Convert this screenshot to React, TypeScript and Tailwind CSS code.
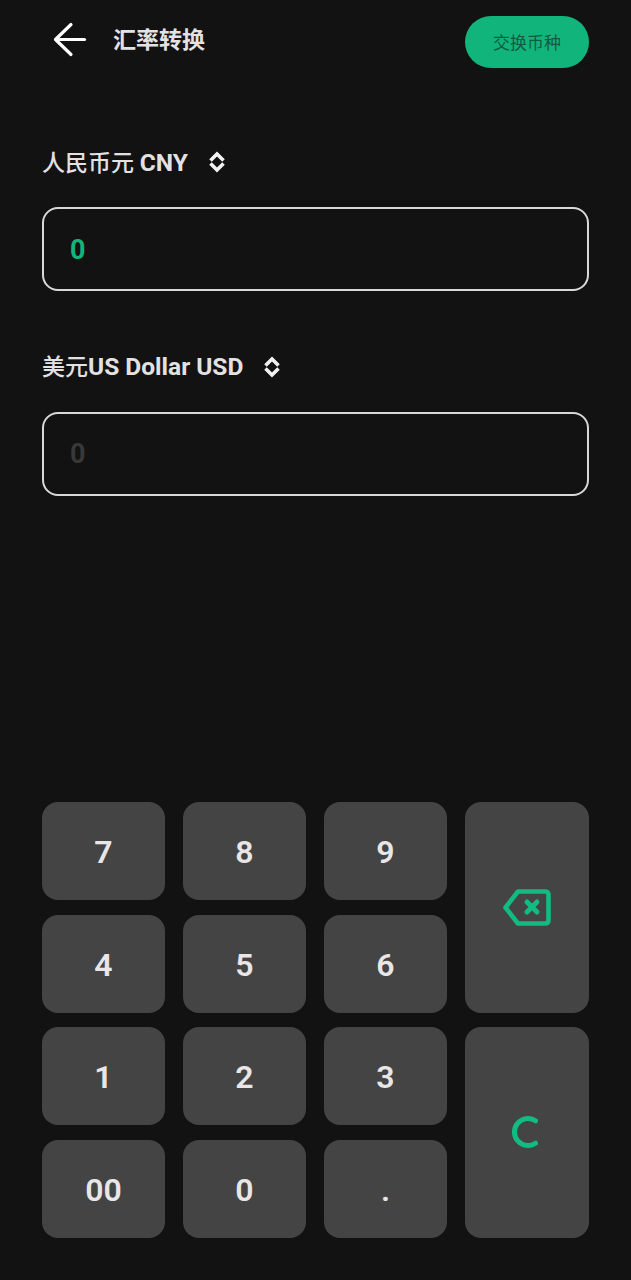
const font = "font-['Roboto','Noto_Sans_CJK_SC',sans-serif]";

function Chevrons() {
  return (
    <svg className="mb-[2px]" width="16" height="22" viewBox="0 0 16 22" fill="none" stroke="#f2f2f2" strokeWidth="3.6" strokeLinecap="butt" strokeLinejoin="miter">
      <path d="M1.5 9.5 L8 3 L14.5 9.5" />
      <path d="M1.5 12.5 L8 19 L14.5 12.5" />
    </svg>
  );
}

function Field({ cjk, latin, active }: { cjk: string; latin: string; active?: boolean }) {
  return (
    <div className="flex flex-col">
      <div className="flex h-8 items-center gap-[21px]">
        <span className="text-[23px] leading-8 font-medium text-[#e3e1e1]">
          {cjk}
          <span className="text-[24.5px] font-bold">{latin}</span>
        </span>
        <Chevrons />
      </div>
      <div className="mt-7 flex h-[84px] items-center rounded-[16px] border-2 border-[#d9d7d7] pt-[2px] pl-[26px]">
        <span className={active ? "text-[27px] font-bold text-[#11b57c]" : "text-[27px] font-bold text-[#383838]"}>0</span>
      </div>
    </div>
  );
}

function Key({ label }: { label: string }) {
  return (
    <button className="flex h-[98px] items-center justify-center rounded-[16px] bg-[#444444] pt-[2px] text-[32px] font-semibold text-[#e8e6e6]">
      {label}
    </button>
  );
}

export default function App() {
  return (
    <div className={`${font} flex h-[1280px] w-[631px] flex-col bg-[#121212] px-[42px]`}>
      <header className="mt-4 flex h-[52px] items-start justify-between">
        <div className="flex items-center">
          <svg className="ml-[10px]" width="36" height="46" viewBox="0 0 36 46" fill="none" stroke="#ffffff" strokeWidth="3.2" strokeLinecap="round" strokeLinejoin="round">
            <path d="M32.5 22.5 H4" />
            <path d="M19 7.5 L3.5 22.5 L19 37.5" />
          </svg>
          <h1 className="mt-[2px] ml-[25px] text-[23px] leading-[46px] font-bold text-[#e3e1e1]">汇率转换</h1>
        </div>
        <button className="flex h-[52px] w-[124px] items-center justify-center rounded-full bg-[#11b57c] pt-1 text-[17px] text-[#125a41]">
          交换币种
        </button>
      </header>

      <main className="mt-[79px] flex flex-col gap-[60.5px]">
        <Field cjk="人民币元 " latin="CNY" active />
        <Field cjk="美元" latin="US Dollar USD" />
      </main>

      <div className="mt-[306.5px] grid grid-cols-[123px_123px_123px_124px] gap-x-[18px] gap-y-[14.6px]">
        <Key label="7" />
        <Key label="8" />
        <Key label="9" />
        <button className="row-span-2 flex items-center justify-center rounded-[16px] bg-[#444444]">
          <svg width="48" height="37" viewBox="0 0 48 37" fill="none" stroke="#12bb82" strokeWidth="4.6" strokeLinecap="round" strokeLinejoin="round">
            <path d="M15 2.5 H42 Q45.5 2.5 45.5 6 V31 Q45.5 34.5 42 34.5 H15 L2.5 18.5 Z" />
            <path d="M24 13 L34 23" strokeWidth="5" />
            <path d="M34 13 L24 23" strokeWidth="5" />
          </svg>
        </button>
        <Key label="4" />
        <Key label="5" />
        <Key label="6" />
        <Key label="1" />
        <Key label="2" />
        <Key label="3" />
        <button className="row-span-2 flex items-center justify-center rounded-[16px] bg-[#444444]">
          <svg className="mr-[5px]" width="26" height="32" viewBox="0 0 26 32" fill="none" stroke="#12bb82" strokeWidth="5" strokeLinecap="round">
            <path d="M23.5 4.8 A13.5 13.5 0 1 0 23.5 27.2" />
          </svg>
        </button>
        <Key label="00" />
        <Key label="0" />
        <Key label="." />
      </div>
    </div>
  );
}
